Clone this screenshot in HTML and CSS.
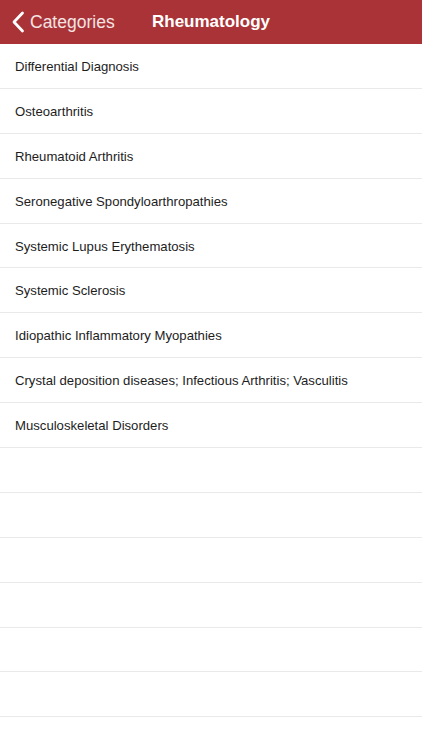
FILE: index.html
```html
<!DOCTYPE html>
<html>
<head>
<meta charset="utf-8">
<link rel="stylesheet" href="styles.css">
</head>
<body>
<header class="navbar">
  <div class="back">
    <svg class="chev" width="14" height="22" viewBox="0 0 14 22"><path d="M11.5 2 L3 11 L11.5 20" fill="none" stroke="#fff" stroke-width="2.8" stroke-linecap="round" stroke-linejoin="round"/></svg>
    <span class="back-label">Categories</span>
  </div>
  <div class="title">Rheumatology</div>
</header>
<ul class="list">
  <li class="row">Differential Diagnosis</li>
  <li class="row">Osteoarthritis</li>
  <li class="row">Rheumatoid Arthritis</li>
  <li class="row">Seronegative Spondyloarthropathies</li>
  <li class="row">Systemic Lupus Erythematosis</li>
  <li class="row">Systemic Sclerosis</li>
  <li class="row">Idiopathic Inflammatory Myopathies</li>
  <li class="row">Crystal deposition diseases; Infectious Arthritis; Vasculitis</li>
  <li class="row">Musculoskeletal Disorders</li>
  <li class="row"></li>
  <li class="row"></li>
  <li class="row"></li>
  <li class="row"></li>
  <li class="row"></li>
  <li class="row"></li>
  <li class="row"></li>
</ul>
</body>
</html>
```
FILE: styles.css
```css
html, body {
  margin: 0;
  padding: 0;
  background: #ffffff;
  font-family: "Liberation Sans", Arial, sans-serif;
  overflow: hidden;
}
.navbar {
  position: relative;
  height: 44px;
  background: #a93336;
  display: flex;
  align-items: center;
  color: #ffffff;
}
.back {
  display: flex;
  align-items: center;
  padding-left: 11px;
  gap: 5px;
}
.chev {
  display: block;
}
.back-label {
  font-size: 17.5px;
  color: #f6e4e4;
}
.title {
  position: absolute;
  left: 0;
  right: 0;
  text-align: center;
  font-size: 17px;
  font-weight: bold;
  pointer-events: none;
}
.list {
  list-style: none;
  margin: 0;
  padding: 0;
}
.row {
  height: 42.9px;
  padding-top: 1px;
  box-sizing: content-box;
  border-bottom: 1px solid #e9e9ea;
  display: flex;
  align-items: center;
  padding-left: 15px;
  font-size: 13.15px;
  color: #1d1d1d;
}
```
